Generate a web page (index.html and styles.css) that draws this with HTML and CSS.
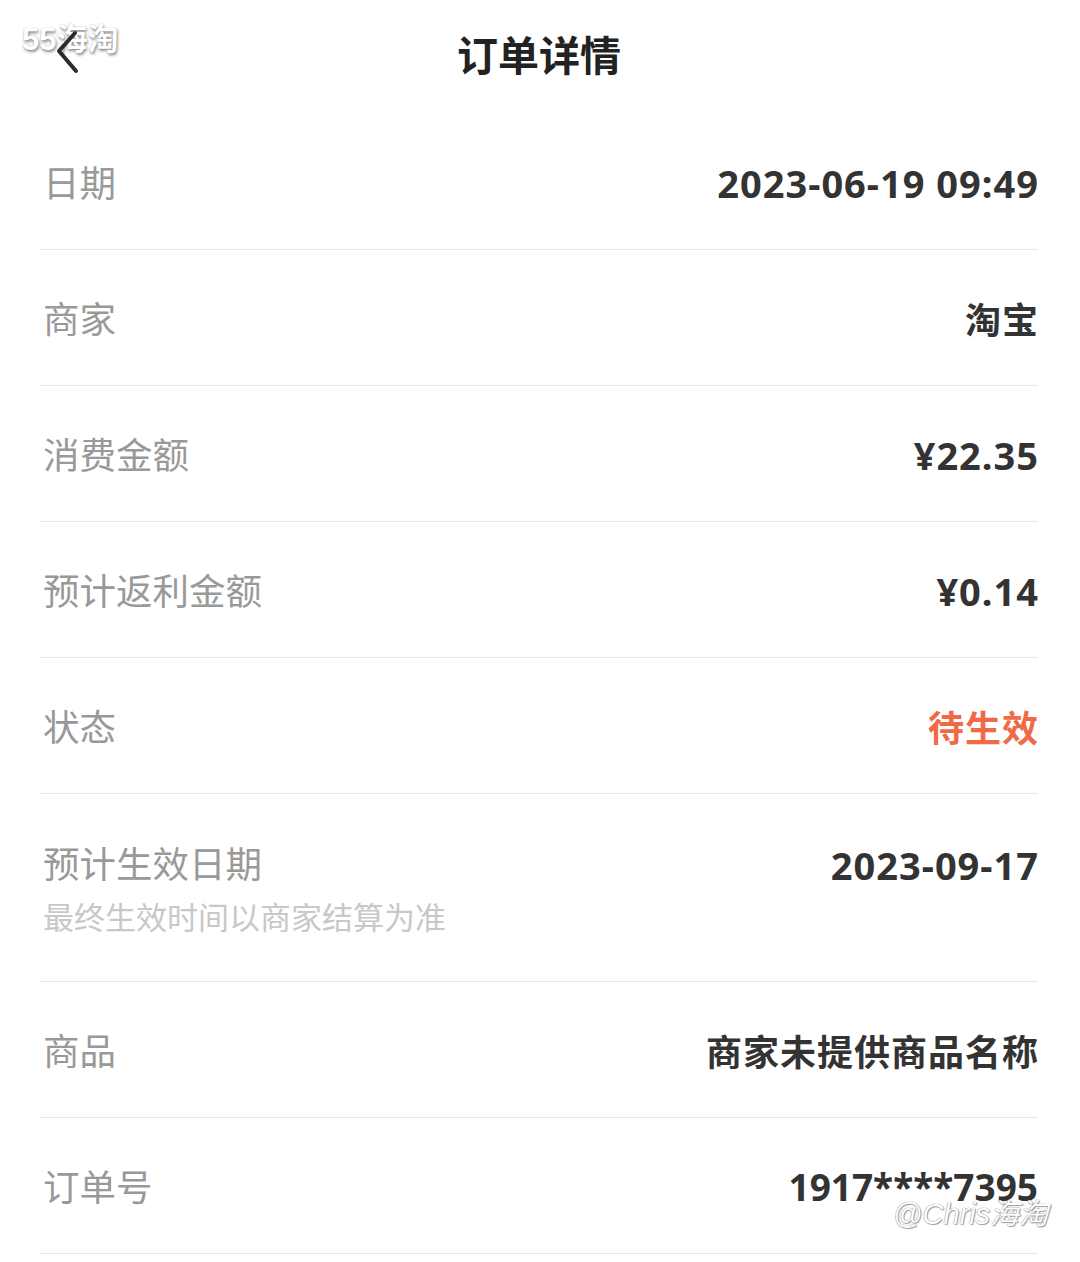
FILE: index.html
```html
<!DOCTYPE html>
<html lang="zh">
<head>
<meta charset="utf-8">
<title>订单详情</title>
<link rel="stylesheet" href="styles.css">
</head>
<body>
<div class="page">
  <header class="header">
    <span class="back">
      <svg width="24" height="44" viewBox="0 0 24 44"><polyline points="20,3 4,21 21,41" fill="none" stroke="#2b2b2b" stroke-width="4" stroke-linecap="round" stroke-linejoin="round"/></svg>
    </span>
    <h1 class="title">订单详情</h1>
  </header>
  <ul class="list">
    <li class="row"><span class="label">日期</span><span class="value num">2023-06-19 09:49</span></li>
    <li class="row"><span class="label">商家</span><span class="value">淘宝</span></li>
    <li class="row"><span class="label">消费金额</span><span class="value num">¥22.35</span></li>
    <li class="row"><span class="label">预计返利金额</span><span class="value num">¥0.14</span></li>
    <li class="row"><span class="label">状态</span><span class="value orange">待生效</span></li>
    <li class="row tall">
      <div class="stack"><span class="label">预计生效日期</span><span class="sub">最终生效时间以商家结算为准</span></div>
      <span class="value num">2023-09-17</span>
    </li>
    <li class="row"><span class="label">商品</span><span class="value">商家未提供商品名称</span></li>
    <li class="row"><span class="label">订单号</span><span class="value num order">1917****7395</span></li>
  </ul>
  <div class="wm wm-top">55海淘</div>
  <div class="wm wm-bottom">@Chris海淘</div>
</div>
</body>
</html>
```
FILE: styles.css
```css
* { box-sizing: border-box; }
html, body { margin: 0; padding: 0; background: #fff; }
body {
  font-family: "Noto Sans CJK SC", "Noto Sans", sans-serif;
  color: #333;
}
.page { position: relative; width: 1080px; padding: 0 42px 0 40px; }
.header {
  height: 114px;
  display: flex;
  align-items: flex-start;
  justify-content: center;
  position: relative;
}
.back { position: absolute; left: 15px; top: 30px; display: block; z-index: 2; }
.back svg { display: block; }
.title {
  margin: 0;
  margin-top: 27px;
  font-size: 41px;
  line-height: 52px;
  font-weight: 700;
  color: #222;
}
.list { list-style: none; margin: 0; padding: 0; }
.row {
  height: 136px;
  border-bottom: 1.5px solid #e6e6e6;
  display: flex;
  align-items: center;
  justify-content: space-between;
  padding-left: 3px;
}
.label { font-size: 36.5px; line-height: 50px; color: #999; }
.value {
  font-size: 36px; line-height: 50px; font-weight: 700; color: #333;
  letter-spacing: 1px; margin-right: -1px;
}
.value.num {
  font-family: "Noto Sans", "Noto Sans CJK SC", sans-serif;
  font-size: 38px;
  padding-top: 2px;
}
.value.order { font-size: 37px; letter-spacing: 0; margin-right: 0; }
.orange { color: #f06a46; }
.row.tall {
  height: 188px;
  align-items: flex-start;
  padding-top: 44px;
}
.stack { display: flex; flex-direction: column; }
.sub { font-size: 31px; line-height: 44px; color: #c8c8c8; margin-top: 6px; }
.wm {
  position: absolute;
  color: #fff;
  font-family: "Liberation Sans", "Noto Sans CJK SC", sans-serif;
  z-index: 1;
}
.wm-top {
  left: 22px; top: 20px;
  font-size: 31px;
  line-height: 40px;
  font-weight: 700;
  text-shadow: 1px 2px 3px rgba(0,0,0,0.45), 0 0 1px rgba(0,0,0,0.3);
}
.wm-bottom {
  left: 893px; top: 1194px;
  font-size: 29px;
  line-height: 40px;
  font-style: italic;
  text-shadow: 0 0 1px #555, 1px 1px 1px rgba(0,0,0,0.35);
}
```
